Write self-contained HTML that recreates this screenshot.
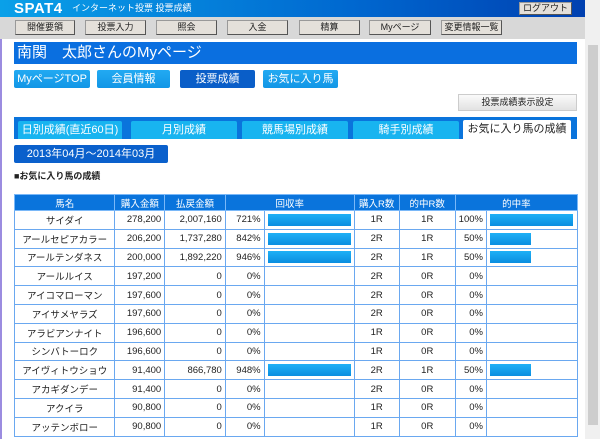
<!DOCTYPE html>
<html><head><meta charset="utf-8"><style>
*{margin:0;padding:0;box-sizing:border-box}
body{width:600px;height:439px;overflow:hidden;background:#fff;font-family:"Liberation Sans","Noto Sans CJK JP",sans-serif;position:relative;color:#222}
.a{position:absolute}
.hdr{left:0;top:0;width:585px;height:17px;background:linear-gradient(90deg,#0aa0e8,#0068d0 60%,#0040b0)}
.nav{left:0;top:17px;width:585px;height:22px;background:#d8d8d8}
.nb{position:absolute;top:3px;height:15px;background:#e4e0da;border:1px solid #999;border-right-color:#555;border-bottom-color:#555;font-size:9px;text-align:center;line-height:13px;color:#222}
.sb{left:585px;top:0;width:15px;height:439px;background:#f0f0f0}
.btn{position:absolute;top:70px;height:18px;background:linear-gradient(#22aaf2,#1296e6);color:#fff;font-size:11px;text-align:center;line-height:18px;border-radius:2px}
.tab{position:absolute;top:121px;height:18px;background:#18b4f0;color:#fff;font-size:11px;text-align:center;line-height:18px;border-radius:2px 2px 0 0}
table{position:absolute;left:14px;top:194px;border-collapse:collapse;font-size:9.5px;width:564px}
td,th{border:1px solid #6aa8f0;height:18.8px;padding:0 3px}
th{background:#0a74dc;color:#fff;font-weight:normal;height:16px;border-color:#7ab8f8}
td{text-align:right}
td.c{text-align:center}
.bar{height:12px;background:linear-gradient(#1eb0f6,#0a8ee0)}
</style></head><body>
<div class="a" style="left:0;top:0;width:2px;height:439px;background:#9b8ce0"></div>
<div class="a hdr"></div>
<div class="a" style="left:14px;top:0;color:#fff;font-weight:bold;font-size:15px;line-height:17px;letter-spacing:0.5px">SPAT4</div>
<div class="a" style="left:72px;top:0;color:#fff;font-size:9px;line-height:17px">インターネット投票 投票成績</div>
<div class="a nb" style="left:519px;top:2px;width:53px;height:13px;line-height:11px">ログアウト</div>
<div class="a nav"></div>
<div class="nb" style="left:15px;top:20px;width:60px">開催要領</div>
<div class="nb" style="left:85px;top:20px;width:61px">投票入力</div>
<div class="nb" style="left:156px;top:20px;width:61px">照会</div>
<div class="nb" style="left:227px;top:20px;width:61px">入金</div>
<div class="nb" style="left:299px;top:20px;width:61px">精算</div>
<div class="nb" style="left:369px;top:20px;width:62px">Myページ</div>
<div class="nb" style="left:441px;top:20px;width:61px">変更情報一覧</div>
<div class="a sb"></div>
<div class="a" style="left:588px;top:45px;width:10px;height:380px;background:#cdcdcd"></div>
<div class="a" style="left:14px;top:42px;width:563px;height:22px;background:#0a6fe0;color:#fff;font-size:15px;line-height:22px;padding-left:3px">南関　太郎さんのMyページ</div>
<div class="btn" style="left:14px;width:76px">MyページTOP</div>
<div class="btn" style="left:97px;width:73px">会員情報</div>
<div class="btn" style="left:180px;width:75px;background:#0a5ec8">投票成績</div>
<div class="btn" style="left:263px;width:75px">お気に入り馬</div>
<div class="a" style="left:458px;top:94px;width:119px;height:17px;background:linear-gradient(#fafafa,#e2e2e2);border:1px solid #ccc;font-size:9px;text-align:center;line-height:15px">投票成績表示設定</div>
<div class="a" style="left:14px;top:117px;width:563px;height:22px;background:#0a74dc"></div>
<div class="tab" style="left:18px;width:104px">日別成績(直近60日)</div>
<div class="tab" style="left:131px;width:106px">月別成績</div>
<div class="tab" style="left:242px;width:106px">競馬場別成績</div>
<div class="tab" style="left:353px;width:106px">騎手別成績</div>
<div class="tab" style="left:463px;width:108px;background:#fff;color:#222;top:120px;height:19px">お気に入り馬の成績</div>
<div class="a" style="left:14px;top:145px;width:154px;height:18px;background:#0a60cc;color:#fff;font-size:11px;text-align:center;line-height:18px;border-radius:2px">2013年04月～2014年03月</div>
<div class="a" style="left:14px;top:170px;font-size:9px;font-weight:bold;line-height:12px">■お気に入り馬の成績</div>
<table>
<colgroup><col style="width:103px"><col style="width:50px"><col style="width:61px"><col style="width:39px"><col style="width:90px"><col style="width:46px"><col style="width:57px"><col style="width:27px"><col style="width:91px"></colgroup>
<tr><th>馬名</th><th>購入金額</th><th>払戻金額</th><th colspan="2">回収率</th><th>購入R数</th><th>的中R数</th><th colspan="2">的中率</th></tr>
<tr><td class="c">サイダイ</td><td>278,200</td><td>2,007,160</td><td>721%</td><td><div class="bar" style="width:83px"></div></td><td class="c">1R</td><td class="c">1R</td><td>100%</td><td><div class="bar" style="width:83px"></div></td></tr>
<tr><td class="c">アールセピアカラー</td><td>206,200</td><td>1,737,280</td><td>842%</td><td><div class="bar" style="width:83px"></div></td><td class="c">2R</td><td class="c">1R</td><td>50%</td><td><div class="bar" style="width:41px"></div></td></tr>
<tr><td class="c">アールテンダネス</td><td>200,000</td><td>1,892,220</td><td>946%</td><td><div class="bar" style="width:83px"></div></td><td class="c">2R</td><td class="c">1R</td><td>50%</td><td><div class="bar" style="width:41px"></div></td></tr>
<tr><td class="c">アールルイス</td><td>197,200</td><td>0</td><td>0%</td><td></td><td class="c">2R</td><td class="c">0R</td><td>0%</td><td></td></tr>
<tr><td class="c">アイコマローマン</td><td>197,600</td><td>0</td><td>0%</td><td></td><td class="c">2R</td><td class="c">0R</td><td>0%</td><td></td></tr>
<tr><td class="c">アイサメヤラズ</td><td>197,600</td><td>0</td><td>0%</td><td></td><td class="c">2R</td><td class="c">0R</td><td>0%</td><td></td></tr>
<tr><td class="c">アラビアンナイト</td><td>196,600</td><td>0</td><td>0%</td><td></td><td class="c">1R</td><td class="c">0R</td><td>0%</td><td></td></tr>
<tr><td class="c">シンバトーロク</td><td>196,600</td><td>0</td><td>0%</td><td></td><td class="c">1R</td><td class="c">0R</td><td>0%</td><td></td></tr>
<tr><td class="c">アイヴィトウショウ</td><td>91,400</td><td>866,780</td><td>948%</td><td><div class="bar" style="width:83px"></div></td><td class="c">2R</td><td class="c">1R</td><td>50%</td><td><div class="bar" style="width:41px"></div></td></tr>
<tr><td class="c">アカギダンデー</td><td>91,400</td><td>0</td><td>0%</td><td></td><td class="c">2R</td><td class="c">0R</td><td>0%</td><td></td></tr>
<tr><td class="c">アクイラ</td><td>90,800</td><td>0</td><td>0%</td><td></td><td class="c">1R</td><td class="c">0R</td><td>0%</td><td></td></tr>
<tr><td class="c">アッテンボロー</td><td>90,800</td><td>0</td><td>0%</td><td></td><td class="c">1R</td><td class="c">0R</td><td>0%</td><td></td></tr>
</table>
</body></html>
